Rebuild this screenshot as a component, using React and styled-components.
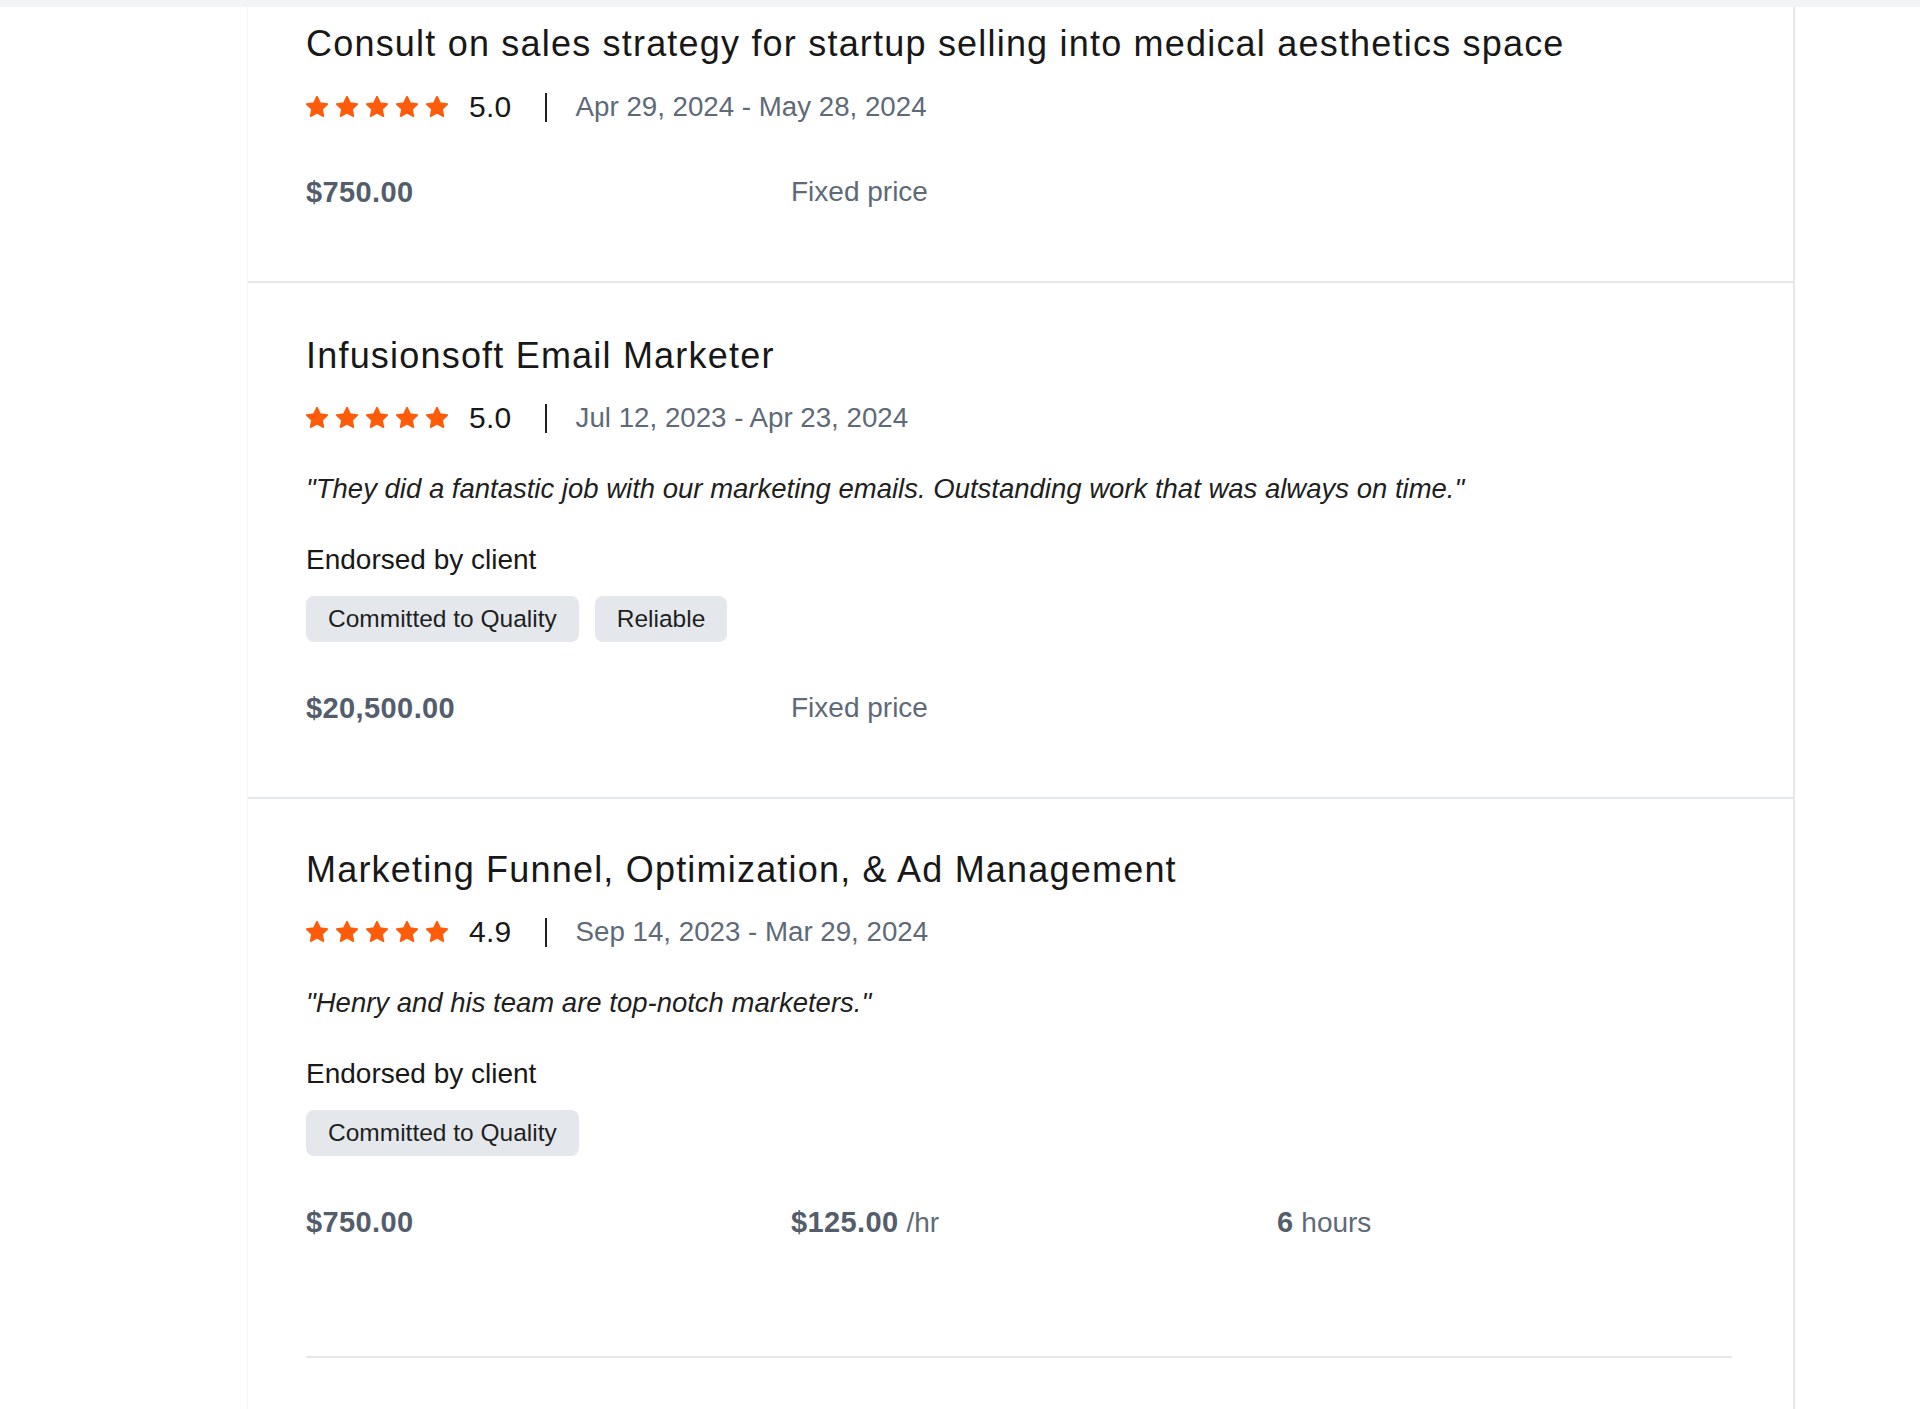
import React from "react";
import styled, { createGlobalStyle } from "styled-components";

const Global = createGlobalStyle`
  html, body {
    margin: 0;
    padding: 0;
    background: #ffffff;
  }
  body {
    font-family: "Liberation Sans", Arial, Helvetica, sans-serif;
    color: #181818;
    -webkit-font-smoothing: antialiased;
  }
`;

const TopStrip = styled.div`
  height: 7px;
  background: #f2f3f5;
`;

const Page = styled.main`
  display: flex;
  padding-left: 247px;
`;

const Card = styled.section`
  width: 1548px;
  min-height: 1402px;
  box-sizing: border-box;
  border-left: 1px solid #f3f4f6;
  border-right: 2px solid #e4e7eb;
  background: #ffffff;
`;

const Job = styled.article`
  display: flex;
  flex-direction: column;
  align-items: flex-start;
  padding: ${(p) => p.$top}px 60px ${(p) => p.$bottom}px 58px;
  border-bottom: ${(p) => (p.$last ? "none" : "2px solid #e4e7eb")};
`;

const Title = styled.h3`
  margin: 0;
  font-size: 36px;
  line-height: 44px;
  font-weight: 400;
  letter-spacing: 1.2px;
  color: #181818;
`;

const Meta = styled.div`
  display: flex;
  align-items: center;
  height: 40px;
  margin-top: ${(p) => p.$gap ?? 20}px;
`;

const Stars = styled.div`
  display: flex;
  gap: 8px;
`;

const Rating = styled.span`
  margin-left: 21px;
  font-size: 30px;
  line-height: 40px;
  letter-spacing: 0.3px;
  color: #181818;
`;

const Bar = styled.span`
  width: 2px;
  height: 29px;
  margin: 0 29px 0 33px;
  background: #1f1f1f;
`;

const Dates = styled.span`
  font-size: 27.7px;
  line-height: 40px;
  color: #5e6a78;
`;

const Quote = styled.p`
  margin: 31px 0 0;
  font-size: 27.5px;
  line-height: 40px;
  font-style: italic;
  color: #1f1f1f;
`;

const Endorsed = styled.div`
  margin-top: 31px;
  font-size: 28px;
  line-height: 40px;
  color: #181818;
`;

const Chips = styled.div`
  display: flex;
  gap: 16px;
  margin-top: 16px;
`;

const Chip = styled.span`
  display: inline-flex;
  align-items: center;
  height: 46px;
  padding: 0 22px;
  border-radius: 8px;
  background: #e4e8ec;
  font-size: 24.5px;
  color: #1f1f1f;
`;

const Terms = styled.div`
  display: grid;
  grid-template-columns: 485px 486px 1fr;
  width: 100%;
  margin-top: ${(p) => p.$gap}px;
  font-size: 28px;
  line-height: 40px;
  color: #5e6a78;
`;

const Strong = styled.strong`
  font-weight: 700;
  font-size: 29px;
  letter-spacing: 0.4px;
  color: #535d6b;
`;

const InsetRule = styled.hr`
  margin: 0 61px 0 58px;
  border: 0;
  height: 2px;
  background: #e6e8eb;
`;

const Star = () => (
  <svg width="22" height="22" viewBox="1.6 1.6 20.8 20.8" aria-hidden="true">
    <path
      d="M12 2.2l2.95 6.2 6.75.85-4.95 4.7 1.3 6.75L12 17.4l-6.05 3.3 1.3-6.75-4.95-4.7 6.75-.85z"
      fill="#fe5c0a"
      stroke="#fe5c0a"
      strokeWidth="1.6"
      strokeLinejoin="round"
    />
  </svg>
);

const jobs = [
  {
    title: "Consult on sales strategy for startup selling into medical aesthetics space",
    rating: "5.0",
    dates: "Apr 29, 2024 - May 28, 2024",
    price: "$750.00",
    kind: "fixed",
    top: 15,
    bottom: 69,
  },
  {
    title: "Infusionsoft Email Marketer",
    rating: "5.0",
    dates: "Jul 12, 2023 - Apr 23, 2024",
    quote:
      "\"They did a fantastic job with our marketing emails. Outstanding work that was always on time.\"",
    tags: ["Committed to Quality", "Reliable"],
    price: "$20,500.00",
    kind: "fixed",
    top: 51,
    bottom: 69,
  },
  {
    title: "Marketing Funnel, Optimization, & Ad Management",
    rating: "4.9",
    dates: "Sep 14, 2023 - Mar 29, 2024",
    quote: "\"Henry and his team are top-notch marketers.\"",
    tags: ["Committed to Quality"],
    price: "$750.00",
    kind: "hourly",
    rate: "$125.00",
    hours: "6",
    top: 49,
    bottom: 113,
    last: true,
  },
];

const JobItem = ({ job }) => (
  <Job $top={job.top} $bottom={job.bottom} $last={job.last}>
    <Title>{job.title}</Title>
    <Meta $gap={job.quote ? 20 : 21}>
      <Stars>
        {[0, 1, 2, 3, 4].map((i) => (
          <Star key={i} />
        ))}
      </Stars>
      <Rating>{job.rating}</Rating>
      <Bar />
      <Dates>{job.dates}</Dates>
    </Meta>
    {job.quote && <Quote>{job.quote}</Quote>}
    {job.tags && (
      <>
        <Endorsed>Endorsed by client</Endorsed>
        <Chips>
          {job.tags.map((t) => (
            <Chip key={t}>{t}</Chip>
          ))}
        </Chips>
      </>
    )}
    <Terms $gap={job.tags ? 46 : 45}>
      <Strong>{job.price}</Strong>
      {job.kind === "fixed" ? (
        <span>Fixed price</span>
      ) : (
        <>
          <span>
            <Strong>{job.rate}</Strong> /hr
          </span>
          <span>
            <Strong>{job.hours}</Strong> hours
          </span>
        </>
      )}
    </Terms>
  </Job>
);

export default function App() {
  return (
    <>
      <Global />
      <TopStrip />
      <Page>
        <Card>
          {jobs.map((job) => (
            <JobItem key={job.title} job={job} />
          ))}
          <InsetRule />
        </Card>
      </Page>
    </>
  );
}
